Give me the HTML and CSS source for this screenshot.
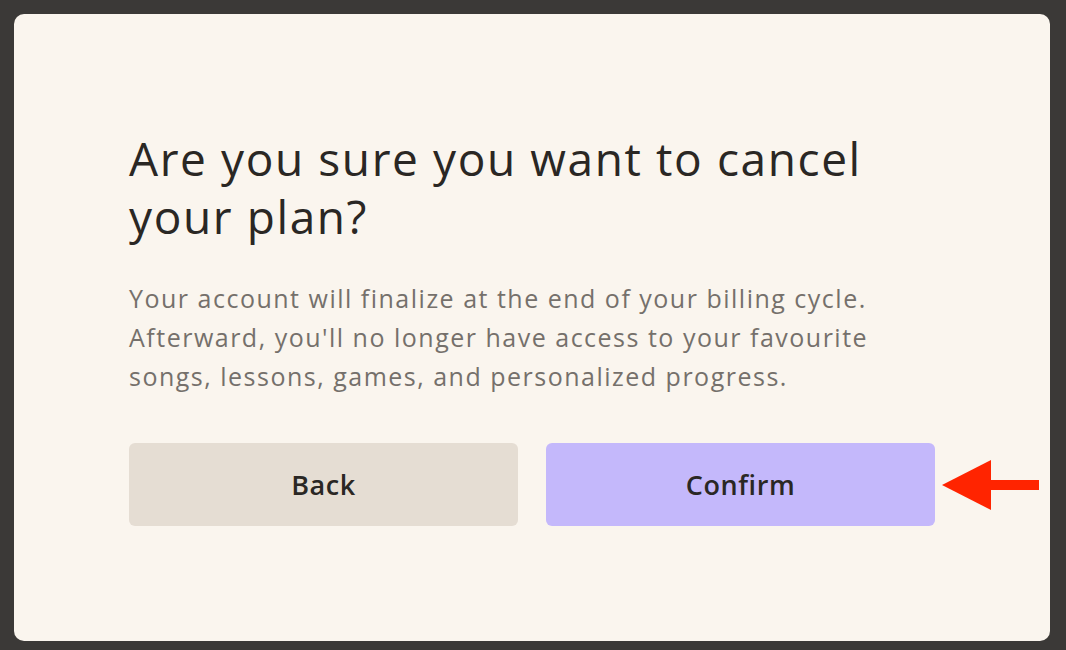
FILE: index.html
```html
<!DOCTYPE html>
<html>
<head>
<meta charset="utf-8">
<link rel="stylesheet" href="styles.css">
</head>
<body>
<div class="card">
  <div class="content">
    <h1 class="title">Are you sure you want to cancel<br>your plan?</h1>
    <p class="desc">Your account will finalize at the end of your billing cycle.<br>Afterward, you'll no longer have access to your favourite<br>songs, lessons, games, and personalized progress.</p>
    <div class="actions">
      <button class="btn btn-back">Back</button>
      <button class="btn btn-confirm">Confirm</button>
    </div>
  </div>
  <svg class="arrow" width="100" height="52" viewBox="0 0 100 52">
    <polygon points="0,26 49,1 49,51" fill="#ff2400"/>
    <rect x="48" y="21" width="49" height="10" fill="#ff2400"/>
  </svg>
</div>
</body>
</html>
```
FILE: styles.css
```css
html, body {
  margin: 0;
  padding: 0;
  background: #3b3937;
}
body {
  padding: 14px 16px 9px 14px;
  height: 650px;
  box-sizing: border-box;
  font-family: "Open Sans", "Noto Sans", sans-serif;
}
.card {
  position: relative;
  height: 627px;
  background: #faf5ee;
  border-radius: 10px;
  display: flex;
  align-items: center;
  padding-left: 115px;
  box-sizing: border-box;
}
.content {
  width: 806px;
}
.title {
  margin: 0;
  font-size: 46px;
  font-weight: 400;
  line-height: 58px;
  color: #2a2724;
  letter-spacing: 1.6px;
  white-space: nowrap;
}
.desc {
  margin: 34px 0 0;
  font-size: 25px;
  line-height: 39px;
  color: #75706b;
  letter-spacing: 1.5px;
  white-space: nowrap;
}
.actions {
  margin-top: 47px;
  display: flex;
  gap: 28px;
}
.btn {
  flex: 1;
  height: 83px;
  border: none;
  border-radius: 6px;
  font-family: "Open Sans", "Noto Sans", sans-serif;
  font-size: 27px;
  font-weight: 600;
  color: #2a2724;
  letter-spacing: 0.6px;
}
.btn-back { background: #e5ddd3; }
.btn-confirm { background: #c4b8fb; }
.arrow {
  position: absolute;
  left: 928px;
  top: 445px;
}
```
